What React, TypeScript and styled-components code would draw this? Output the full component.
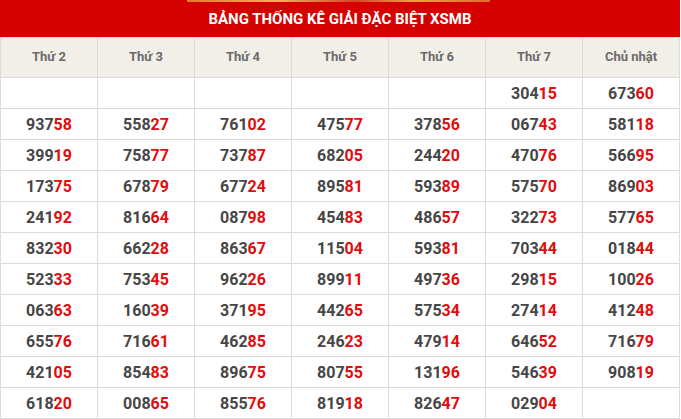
import styled, { createGlobalStyle } from 'styled-components';

const GlobalStyle = createGlobalStyle`
  body {
    margin: 0;
    background: #ffffff;
    font-family: Roboto, "Liberation Sans", sans-serif;
  }
`;

const days = ['Thứ 2', 'Thứ 3', 'Thứ 4', 'Thứ 5', 'Thứ 6', 'Thứ 7', 'Chủ nhật'];

const rows: string[][] = [
  ['', '', '', '', '', '30415', '67360'],
  ['93758', '55827', '76102', '47577', '37856', '06743', '58118'],
  ['39919', '75877', '73787', '68205', '24420', '47076', '56695'],
  ['17375', '67879', '67724', '89581', '59389', '57570', '86903'],
  ['24192', '81664', '08798', '45483', '48657', '32273', '57765'],
  ['83230', '66228', '86367', '11504', '59381', '70344', '01844'],
  ['52333', '75345', '96226', '89911', '49736', '29815', '10026'],
  ['06363', '16039', '37195', '44265', '57534', '27414', '41248'],
  ['65576', '71661', '46285', '24623', '47914', '64652', '71679'],
  ['42105', '85483', '89675', '80755', '13196', '54639', '90819'],
  ['61820', '00865', '85576', '81918', '82647', '02904', ''],
];

const App = () => {
  return (
    <>
      <GlobalStyle />
      <Wrapper>
        <Banner />
        <Heading>BẢNG THỐNG KÊ GIẢI ĐẶC BIỆT XSMB</Heading>
        <Table>
          <thead>
            <tr>
              {days.map((day) => (
                <Title key={day}>{day}</Title>
              ))}
            </tr>
          </thead>
          <tbody>
            {rows.map((row, i) => (
              <Row key={i}>
                {row.map((num, j) => (
                  <Column key={j}>
                    {num && (
                      <>
                        {num.slice(0, 3)}
                        <Tail>{num.slice(3)}</Tail>
                      </>
                    )}
                  </Column>
                ))}
              </Row>
            ))}
          </tbody>
        </Table>
      </Wrapper>
    </>
  );
};

export default App;

const Wrapper = styled.div`
  width: 680px;
  background: #d50000;
`;

const Banner = styled.div`
  height: 2px;
  margin: 0 190px 0 187px;
  background: linear-gradient(90deg, #e8792a, #f2b35a 30%, #d9442b 55%, #f0a040 75%, #e46a2a);
`;

const Heading = styled.div`
  height: 35px;
  line-height: 35px;
  text-align: center;
  color: #ffffff;
  font-size: 15px;
  font-weight: 700;
  background-color: #d50000;
`;

const Table = styled.table`
  width: 680px;
  border-collapse: collapse;
  table-layout: fixed;
  background-color: #ffffff;
  th,
  td {
    border: 1px solid #dcdcdc;
    padding: 0;
    text-align: center;
  }
`;

const Title = styled.th`
  box-sizing: border-box;
  height: 40px;
  background-color: #f2eee8;
  color: #6b6b6b;
  font-size: 13px;
  font-weight: 700;
  && {
    padding: 0 0 3px;
  }
`;

const Row = styled.tr`
  height: 31px;
`;

const Column = styled.td`
  color: #464646;
  font-size: 16px;
  font-weight: 700;
`;

const Tail = styled.span`
  color: #e30b0b;
`;
